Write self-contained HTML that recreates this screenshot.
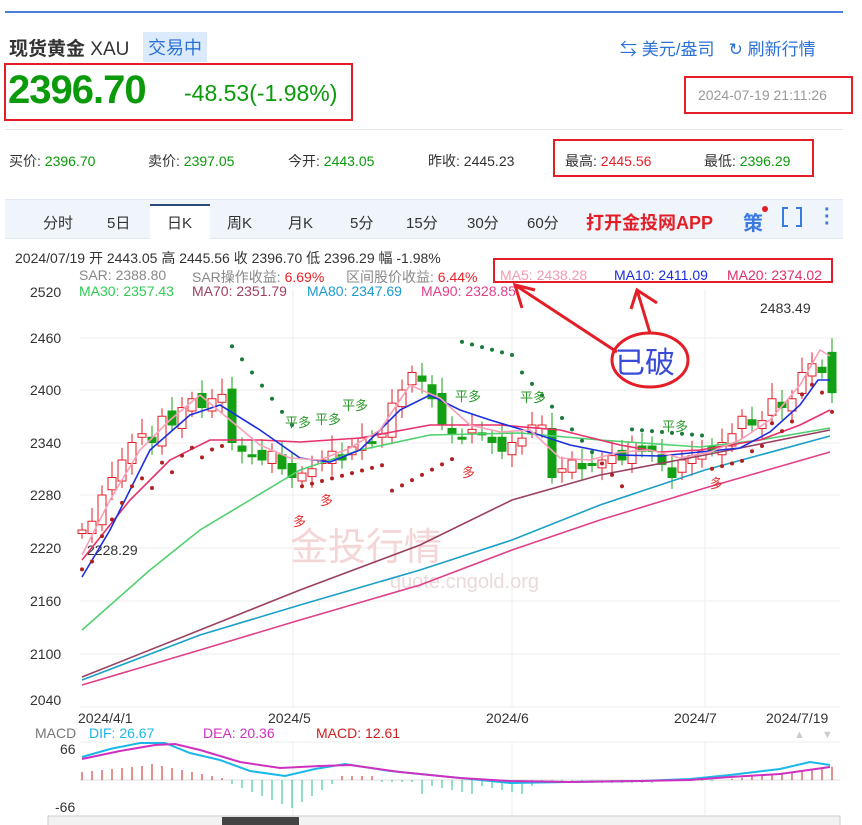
<!DOCTYPE html><html><head><meta charset="utf-8"><style>
*{margin:0;padding:0;box-sizing:border-box}
body{width:862px;height:825px;background:#fff;font-family:"Liberation Sans","Noto Sans CJK SC",sans-serif;position:relative;overflow:hidden;color:#333}
.a{position:absolute;white-space:nowrap}
.g{color:#0a9a0a}.r{color:#e8222a}
.box{position:absolute;border:2px solid #e41e26}
</style></head><body>
<div class="a" style="left:5px;top:11px;width:838px;height:2px;background:#4a7fd9"></div>
<div class="a" style="left:9px;top:34px;font-size:19px;font-weight:bold;color:#333">现货黄金 <span style="font-weight:normal">XAU</span></div>
<div class="a" style="left:143px;top:32px;background:#dcebfb;color:#2a72d8;font-size:18px;padding:2px 5px">交易中</div>
<div class="a" style="left:620px;top:35px;font-size:17px;color:#2a72d8">⇆ 美元/盎司 &nbsp; ↻ 刷新行情</div>
<div class="box" style="left:4px;top:63px;width:349px;height:58px"></div>
<div class="a g" style="left:8px;top:68px;font-size:40px;font-weight:bold;letter-spacing:-1px">2396.70</div>
<div class="a g" style="left:184px;top:80px;font-size:23px">-48.53(-1.98%)</div>
<div class="box" style="left:684px;top:76px;width:169px;height:38px"></div>
<div class="a" style="left:698px;top:87px;font-size:14px;color:#999">2024-07-19 21:11:26</div>
<div class="a" style="left:5px;top:129px;width:838px;height:1px;background:#e6e6e6"></div>
<div class="a" style="left:9px;top:151px;font-size:14px">买价: <span class="g">2396.70</span></div>
<div class="a" style="left:148px;top:151px;font-size:14px">卖价: <span class="g">2397.05</span></div>
<div class="a" style="left:288px;top:151px;font-size:14px">今开: <span class="g">2443.05</span></div>
<div class="a" style="left:428px;top:151px;font-size:14px">昨收: 2445.23</div>
<div class="box" style="left:553px;top:139px;width:261px;height:38px"></div>
<div class="a" style="left:565px;top:151px;font-size:14px">最高: <span class="r">2445.56</span></div>
<div class="a" style="left:704px;top:151px;font-size:14px">最低: <span class="g">2396.29</span></div>
<div class="a" style="left:5px;top:199px;width:838px;height:40px;background:#f0f4fb;border-top:1px solid #e3e9f3;border-bottom:1px solid #e3e9f3"></div>
<div class="a" style="left:150px;top:204px;width:60px;height:35px;background:#fff;border-top:2px solid #2a4a7a"></div>
<div class="a" style="left:0;top:212px;font-size:15px;color:#333">
<span class="a" style="left:43px">分时</span><span class="a" style="left:107px">5日</span><span class="a" style="left:167px">日K</span><span class="a" style="left:227px">周K</span><span class="a" style="left:288px">月K</span><span class="a" style="left:350px">5分</span><span class="a" style="left:406px">15分</span><span class="a" style="left:467px">30分</span><span class="a" style="left:527px">60分</span></div>
<div class="a" style="left:586px;top:209px;font-size:18px;font-weight:bold;color:#e41e26">打开金投网APP</div>
<div class="a" style="left:743px;top:207px;font-size:20px;color:#3a7be0;font-weight:bold">策</div>
<div class="a" style="left:762px;top:206px;width:6px;height:6px;border-radius:3px;background:#e41e26"></div>
<div class="a" style="left:782px;top:207px;width:20px;height:20px;border:2px solid #3a7be0"></div>
<div class="a" style="left:784px;top:213px;width:16px;height:8px;background:#f0f4fb"></div>
<div class="a" style="left:788px;top:205px;width:8px;height:24px;background:#f0f4fb"></div>
<div class="a" style="left:824px;top:207px;color:#3a7be0;font-size:20px;line-height:7px;font-weight:bold">·<br>·<br>·</div>
<div class="a" style="left:15px;top:248px;font-size:14px;color:#333">2024/07/19 开 2443.05 高 2445.56 收 2396.70 低 2396.29 幅 -1.98%</div>
<div class="a" style="left:0;top:267px;font-size:14px;color:#888">
<span class="a" style="left:79px">SAR: 2388.80</span><span class="a" style="left:192px">SAR操作收益: <span class="r">6.69%</span></span><span class="a" style="left:346px">区间股价收益: <span class="r">6.44%</span></span><span class="a" style="left:500px;color:#f59ab0">MA5: 2438.28</span><span class="a" style="left:614px;color:#1a2ee0">MA10: 2411.09</span><span class="a" style="left:727px;color:#e0306a">MA20: 2374.02</span></div>
<div class="a" style="left:0;top:283px;font-size:14px">
<span class="a" style="left:79px;color:#2ecc55">MA30: 2357.43</span><span class="a" style="left:192px;color:#a04060">MA70: 2351.79</span><span class="a" style="left:307px;color:#1a9ad0">MA80: 2347.69</span><span class="a" style="left:421px;color:#e0408a">MA90: 2328.85</span></div>
<div class="box" style="left:493px;top:258px;width:340px;height:25px"></div>
<svg class="a" style="left:0;top:0" width="862" height="825" id="s">
<g stroke="#eee" stroke-width="1">
<line x1="80" y1="338" x2="840" y2="338"/><line x1="80" y1="390" x2="840" y2="390"/><line x1="80" y1="443" x2="840" y2="443"/><line x1="80" y1="495" x2="840" y2="495"/><line x1="80" y1="548" x2="840" y2="548"/><line x1="80" y1="601" x2="840" y2="601"/><line x1="80" y1="654" x2="840" y2="654"/><line x1="80" y1="707" x2="840" y2="707"/>
<line x1="293" y1="290" x2="293" y2="707"/><line x1="512" y1="290" x2="512" y2="707"/><line x1="705" y1="290" x2="705" y2="707"/>
<line x1="80" y1="742" x2="840" y2="742"/><line x1="293" y1="742" x2="293" y2="815"/><line x1="512" y1="742" x2="512" y2="815"/><line x1="705" y1="742" x2="705" y2="815"/>
</g>
<g font-size="14" fill="#333" font-family="Liberation Sans">
<text x="30" y="297">2520</text><text x="30" y="343">2460</text><text x="30" y="395">2400</text><text x="30" y="448">2340</text><text x="30" y="500">2280</text><text x="30" y="553">2220</text><text x="30" y="606">2160</text><text x="30" y="659">2100</text><text x="30" y="705">2040</text>
<text x="78" y="723">2024/4/1</text><text x="268" y="723">2024/5</text><text x="486" y="723">2024/6</text><text x="674" y="723">2024/7</text><text x="766" y="723">2024/7/19</text>
<text x="87" y="555">2228.29</text><text x="760" y="313">2483.49</text>
<text x="35" y="738" fill="#777">MACD</text><text x="89" y="738" fill="#1ab8e8">DIF: 26.67</text><text x="203" y="738" fill="#d030c0">DEA: 20.36</text><text x="316" y="738" fill="#d02020">MACD: 12.61</text>
<text x="60" y="754">66</text><text x="55" y="812">-66</text>
</g>
<text x="290" y="560" font-size="38" fill="#f5d6d6" font-family="Noto Sans CJK SC">金投行情</text>
<text x="390" y="588" font-size="20" fill="#eadada">quote.cngold.org</text>
<g id="c"></g>
<g fill="none" stroke-width="1.6">
<polyline stroke="#e0408a" points="82,685 200,650 300,620 420,585 512,550 600,520 705,488 830,452"/>
<polyline stroke="#1aa0c8" points="82,680 200,635 300,605 420,570 512,540 600,505 705,470 830,436"/>
<polyline stroke="#9a4060" points="82,677 200,630 300,590 420,545 512,500 600,475 705,455 830,430"/>
<polyline stroke="#50d070" points="82,630 150,570 200,530 250,500 300,470 360,450 430,435 520,433 600,440 700,447 760,440 830,428"/>
<polyline stroke="#e8306a" points="82,560 130,500 170,460 210,440 260,440 300,442 360,438 430,425 500,425 560,430 620,445 660,452 700,450 760,440 800,425 830,410"/>
<polyline stroke="#1a2ee0" points="82,577 110,530 150,450 190,415 220,405 260,430 300,458 330,462 360,450 400,410 430,395 460,410 490,420 530,432 570,445 620,455 660,456 700,452 740,448 770,432 800,405 818,380 830,380"/>
<polyline stroke="#f8a0b8" points="82,555 110,500 140,450 170,420 200,395 230,420 260,445 290,458 320,460 350,448 380,430 410,385 440,398 470,425 500,432 530,430 560,458 590,460 620,452 650,450 680,458 710,452 740,440 770,420 800,385 820,350 830,356"/>
</g>
<g id="d"></g>
<g font-size="13" fill="#2a9a2a" font-family="Noto Sans CJK SC"><text x="285" y="427">平多</text><text x="315" y="424">平多</text><text x="342" y="410">平多</text><text x="455" y="401">平多</text><text x="520" y="402">平多</text><text x="662" y="431">平多</text></g>
<g font-size="13" fill="#e83030" font-family="Noto Sans CJK SC"><text x="293" y="526">多</text><text x="320" y="505">多</text><text x="462" y="477">多</text><text x="710" y="488">多</text></g>
<g stroke="#e41e26" stroke-width="3" fill="none">
<ellipse cx="650" cy="360" rx="38" ry="27"/>
<line x1="617" y1="352" x2="515" y2="285"/><polyline points="535,290 515,285 522,308"/>
<line x1="650" y1="333" x2="637" y2="290"/><polyline points="631,309 637,290 657,303"/>
</g>
<text x="615" y="373" font-size="30" fill="#3a4ad8" font-family="Noto Sans CJK SC">已破</text>
<line x1="80" y1="780" x2="840" y2="780" stroke="#ddd"/>
<g id="m"></g>
<g fill="none" stroke-width="2"><polyline stroke="#1ab8e8" points="82,757 110,749 140,743 165,743 190,753 220,760 250,771 285,776 315,769 345,764 390,771 450,777 510,783 570,782 640,781 690,779 730,775 780,769 810,762 830,765"/>
<polyline stroke="#d030c0" points="82,759 120,751 155,745 175,744 200,750 240,762 280,768 320,766 350,765 400,772 460,778 510,781 570,782 640,781 690,780 730,777 780,774 830,767"/></g>
<rect x="48" y="816" width="792" height="10" fill="#f2f2f2" stroke="#ccc"/><rect x="222" y="817" width="77" height="9" fill="#444"/>
<text x="794" y="738" fill="#ccc" font-size="11">▲</text><text x="822" y="738" fill="#ccc" font-size="11">▼</text>
</svg>
<script>
var P=[2240,2250,2280,2300,2320,2340,2350,2340,2370,2360,2380,2390,2380,2390,2395,2340,2330,2325,2320,2330,2310,2300,2305,2310,2320,2330,2320,2335,2345,2340,2350,2385,2400,2420,2410,2390,2360,2350,2345,2355,2350,2340,2330,2340,2345,2360,2360,2300,2310,2320,2310,2315,2320,2325,2320,2340,2330,2330,2315,2300,2320,2325,2330,2330,2340,2350,2370,2360,2365,2390,2380,2390,2420,2430,2420,2397];
function y(p){return 390+(2400-p)*0.875}
var h='',n=P.length,w=(832-82)/(n-1),prev=2230;
for(var i=0;i<n;i++){var x=82+i*w,o=prev+(i%3==0?6:-4),c=P[i];if(i==n-1)o=2443;var up=c>=o;var hi=Math.max(o,c)+8+(i*7%11),lo=Math.min(o,c)-6-(i*5%9);
var col=up?'#e41e26':'#14a014';h+='<line x1="'+x+'" y1="'+y(hi)+'" x2="'+x+'" y2="'+y(lo)+'" stroke="'+col+'"/>';
var t=y(Math.max(o,c)),b=Math.max(2,Math.abs(y(o)-y(c)));h+='<rect x="'+(x-4)+'" y="'+t+'" width="8" height="'+b+'" fill="'+(up?'#fff':col)+'" stroke="'+col+'"/>';prev=c;}
document.getElementById('c').innerHTML=h;
var d='';for(var i=0;i<n;i++){var x=82+i*w,s;if(i<15)s=P[i]-45-i;else if(i<22)s=2450-(i-15)*15;else if(i<31)s=2290+(i-22)*3;else if(i<38)s=2285+(i-31)*6;else if(i<44)s=2455-(i-38)*3;else if(i<55)s=2420-(i-44)*13;else if(i<63)s=2355-(i-55)*1;else if(i<67)s=2310+(i-63)*3;else s=P[i]-30+(i-67);d+='<circle cx="'+x+'" cy="'+y(s)+'" r="2" fill="'+(s>P[i]?'#1a7a3a':'#b02020')+'"/>';}
document.getElementById('d').innerHTML=d;
var m='';for(var i=0;i<n;i++){var x=82+i*w,v;if(i<15)v=i<7?8+i:16-(i-7)*2;else if(i<26)v=-Math.min(28,(i-14)*4)+(i>21?(i-21)*6:0);else if(i<34)v=(i<30?4:-2);else if(i<46)v=-6-(i%5)*2;else if(i<58)v=-3;else if(i<64)v=-1;else v=(i-64)*1.2;var up=v>=0;m+='<line x1="'+x+'" y1="780" x2="'+x+'" y2="'+(780-v)+'" stroke="'+(up?'#d02020':'#20c090')+'"/>';}
document.getElementById('m').innerHTML=m;
</script>
</body></html>
